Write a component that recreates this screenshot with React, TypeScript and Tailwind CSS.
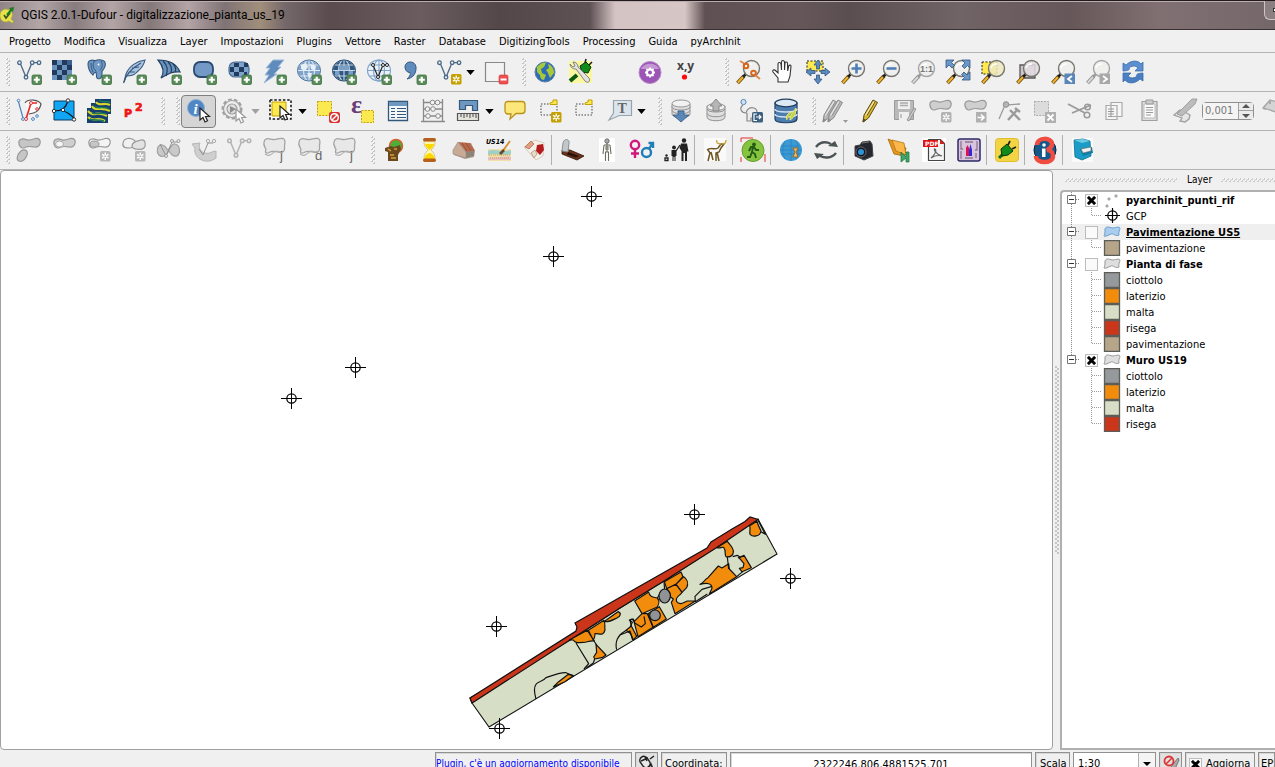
import React, { useState } from "react";

type Kids = { children?: React.ReactNode };

/* ---------- icon building blocks ---------- */

const Ico = ({ children }: Kids) => (
  <svg viewBox="0 0 24 24" className="h-6 w-6 shrink-0 overflow-visible" fill="none" aria-hidden="true">
    {children}
  </svg>
);

const Plus = () => (
  <g>
    <rect x="15" y="15" width="9.5" height="9.5" rx="1.5" fill="#5a8c5a" stroke="#3f7040" strokeWidth=".8" />
    <path d="M19.75 16.8v6M16.8 19.75h6" stroke="#fff" strokeWidth="2.2" />
  </g>
);

const Star = ({ c = "#c4a000", x = 14, y = 14 }: { c?: string; x?: number; y?: number }) => (
  <g transform={`translate(${x} ${y})`}>
    <rect width="10.5" height="10.5" rx="1.5" fill={c} />
    <path d="M5.25 1.5v7.500M2 3.400l6.500 3.700M2 7.100l6.500-3.700" stroke="#fff" strokeWidth="1.4" />
    <circle cx="5.25" cy="5.25" r="1" fill={c} />
  </g>
);

const Vee = ({ c = "#4a6785", w = 1.3 }: { c?: string; w?: number }) => (
  <g stroke={c} strokeWidth={w} fill="#eef3f8">
    <path d="M3.500 4l5 12M9.500 16l5-12M17 2.700h3" fill="none" />
    <circle cx="2.500" cy="2.700" r="1.800" />
    <circle cx="15.200" cy="2.700" r="1.800" />
    <circle cx="22" cy="2.700" r="1.800" />
    <circle cx="9" cy="17.300" r="1.800" />
  </g>
);

const Lens = ({ off = false, fill = "#eeeeec" }: { off?: boolean; fill?: string }) => (
  <g>
    <path d="M1.500 23l6.500-7" stroke={off ? "#8c8c8c" : "#6b4b10"} strokeWidth="3.8" />
    <path d="M1.800 22.700l5.900-6.400" stroke={off ? "#d8d8d8" : "#f0b429"} strokeWidth="2" />
    <path d="M7 17l2.800-3" stroke={off ? "#999" : "#222"} strokeWidth="2.600" />
    <circle cx="15.500" cy="8.500" r="8" fill={fill} fillOpacity=".85" stroke={off ? "#a5a5a5" : "#77776f"} strokeWidth="1.400" />
    <path d="M10 8a5.400 5.400 0 0 1 6-4" stroke="#fff" strokeWidth="1.600" />
  </g>
);

const Globe = ({ a, b }: { a: string; b: string }) => (
  <g stroke={b} strokeWidth="1.100">
    <ellipse cx="12" cy="10.500" rx="11.500" ry="10.500" fill={a} />
    <ellipse cx="12" cy="10.500" rx="5.500" ry="10.500" />
    <path d="M12 0v21M.5 10.500h23M2.500 5h19M2.500 16h19" />
  </g>
);

const BLOB = "M2 7C1 2 6 1 9 2.500s6 0 9-1c4-1 6 2 5 5s-3 4-6 3.500c-3-.500-5-1-8 0-3 2-6 1-7-3z";

const Cursor = ({ x = 12, y = 11, c = "#222" }: { x?: number; y?: number; c?: string }) => (
  <path transform={`translate(${x} ${y})`} d="M0 0v12l3-2.500 2 4.500 2.500-1.200-2-4.300h4z" fill="#fff" stroke={c} strokeWidth="1.200" />
);

const Pencil = ({ c = "#d8b730", d = "#5b4b10" }: { c?: string; d?: string }) => (
  <g>
    <path d="M6 16L15 1l4.500 2.500L10.500 19 5 23z" fill={c} stroke={d} strokeWidth="1" />
    <path d="M9 16.500L17 3M5 23l.6-3.200 1.900 1.500z" stroke={d} strokeWidth=".9" fill={d} />
    <path d="M7.500 16.500L16 2.500" stroke="#fff" strokeOpacity=".7" strokeWidth="1.200" />
  </g>
);

const Swoosh = ({ t }: { t: string }) => (
  <Ico>
    <path d="M2 5c1-5 5-3 9-2.500s6-2 10-1c3 1 2 4 1.500 7 0 3 1 6-2.500 7-5 0-8-3-13 0-4 2-4-1-3-3C3 10 1 8 2 5z" transform="translate(0 -1)" fill="#e8e8e8" stroke="#a3a3a3" strokeWidth="1.300" />
    <path d="M3 16c5 4 8-2 11-3 3 0 4 2 7 0" stroke="#b0b0b0" strokeWidth="1.200" />
    <text x="18" y="22" fontSize="13" fill="#666" fontFamily="Liberation Sans">{t}</text>
  </Ico>
);

/* ---------- toolbar pieces ---------- */

const Grip = () => (
  <svg className="h-7 w-[11px] shrink-0" aria-hidden="true">
    {[0, 1, 2, 3, 4, 5, 6].map((i) => (
      <g key={i}>
        <path d={`M6 ${i * 4}h2v2h-2zM8 ${i * 4 + 2}h2v2h-2z`} fill="#c4c4c4" />
        <path d={`M6 ${i * 4}h1v1h-1zM8 ${i * 4 + 2}h1v1h-1z`} fill="#fff" />
      </g>
    ))}
  </svg>
);

const Tool = ({ label, children, active = false }: Kids & { label: string; active?: boolean }) => (
  <button
    type="button"
    aria-label={label}
    aria-pressed={active || undefined}
    className={
      active
        ? "flex h-[33px] w-[35px] shrink-0 items-center justify-center rounded-sm border border-[#808080] bg-[#d5d5d5]"
        : "flex h-[33px] w-[35px] shrink-0 items-center justify-center rounded-sm"
    }
  >
    {children}
  </button>
);

const Drop = ({ label, off = false }: { label: string; off?: boolean }) => (
  <button type="button" aria-label={label} className="flex h-8 w-3 shrink-0 items-center">
    <svg viewBox="0 0 10 6" className="h-[5px] w-[9px]" aria-hidden="true">
      <path d="M0 0h10L5 6z" fill={off ? "#a0a0a0" : "#000"} />
    </svg>
  </button>
);

const Sep = () => <div className="h-[30px] w-[3px] shrink-0 border-l border-[#b0b0b0]" />;

const Bar = ({ children, label }: Kids & { label: string }) => (
  <div role="toolbar" aria-label={label} className="flex h-[39px] shrink-0 items-center overflow-hidden border-b border-[#b4b4b4] bg-[#f0f0f0]">
    {children}
  </div>
);

/* ---------- toolbars ---------- */

const FileBar = () => (
  <Bar label="Gestione layer">
    <Grip />
    <Tool label="Aggiungi vettore"><Ico><Vee /><Plus /></Ico></Tool>
    <Tool label="Aggiungi raster">
      <Ico>
        <path d="M0 0h20v20H0z" fill="#6b93c0" />
        <path d="M0 0h5v5H0zM10 0h5v5h-5zM5 5h5v5H5zM15 5h5v5h-5zM0 10h5v5H0zM10 10h5v5h-5zM5 15h5v5H5z" fill="#223a5c" />
        <path d="M15 0h5v5h-5z" fill="#3d618f" />
        <Plus />
      </Ico>
    </Tool>
    <Tool label="Aggiungi PostGIS">
      <Ico>
        <path d="M1 4C1 0 5-.500 8 .8c3-1.500 6-1 8-.3 3 1 3 5 1 8l-2 3c0 3 .5 6-2 7s-4-1-3.500-3.500L9 12l-2 1-1 2C3 13 1 8 1 4z" fill="#6f98c4" stroke="#35587f" strokeWidth="1.100" />
        <path d="M7.500 1c-2 3-2 7 1.500 10M14 1c2 3 1.500 6-1 9.500M4 3c0 3 .5 6 2 9" stroke="#35587f" strokeWidth="1" />
        <circle cx="11.500" cy="4.500" r=".9" fill="#fff" />
        <Plus />
      </Ico>
    </Tool>
    <Tool label="Aggiungi SpatiaLite">
      <Ico>
        <path d="M23 0C15 1 7 6 4 14l-2 8 2-6c5 0 9-1 11-4 5-4 7-7 8-12z" fill="#a9c4df" stroke="#3a5a80" strokeWidth="1.100" />
        <path d="M1.500 23C4 14 10 8 19 3M7 12l6 0M10 8l7-1" stroke="#3a5a80" strokeWidth="1.200" />
        <Plus />
      </Ico>
    </Tool>
    <Tool label="Aggiungi MSSQL">
      <Ico>
        <path d="M1 0c8 0 18 2 22 12-7-1-12 2-19 6C8 12 6 6 1 0z" fill="#6b93c0" stroke="#22405f" strokeWidth="1.200" />
        <path d="M6 1c5 5 5 9 3 15M11 2c4 4 4 8 3 11M16 4c3 3 3 6 2 8" stroke="#22405f" strokeWidth="1.200" />
        <Plus />
      </Ico>
    </Tool>
    <Tool label="Aggiungi Oracle"><Ico><rect x="2" y="2" width="19" height="15" rx="6" fill="#7399c6" stroke="#2b4a70" strokeWidth="1.800" /><Plus /></Ico></Tool>
    <Tool label="Aggiungi Oracle raster">
      <Ico>
        <rect x="2" y="2" width="20" height="15" rx="6" fill="#7ea3cc" stroke="#4b6d96" strokeWidth="1.200" />
        <path d="M7 3h5v4H7zM17 3h4v4h-4zM3 7h4v5H3zM12 7h5v5h-5zM7 12h5v4H7zM17 12h3v4h-3z" fill="#223a5c" />
        <Plus />
      </Ico>
    </Tool>
    <Tool label="Aggiungi SQL Anywhere"><Ico><path d="M11 0h11l-6 7h3l-7 7h3L2 23l5-8H3l5-7H4z" fill="#5f8cbd" stroke="#9dbbd9" strokeWidth="1" /><Plus /></Ico></Tool>
    <Tool label="Aggiungi WMS">
      <Ico><Globe a="#7fa3c8" b="#dfeaf5" /><ellipse cx="12" cy="10.500" rx="11.500" ry="10.500" stroke="#4b7097" /><path d="M4 5l5-2 2 4-3 4-4-2zM13 4l6 2-1 5-4-2zM10 13l5 0-2 6z" fill="#e7eff7" /><Plus /></Ico>
    </Tool>
    <Tool label="Aggiungi WCS"><Ico><Globe a="#33587f" b="#c4d6e8" /><path d="M7 6h10v4H7zM3 11h4v4H3zM17 11h4v4h-4z" fill="#7ba0c8" /><ellipse cx="12" cy="10.500" rx="11.500" ry="10.500" stroke="#264869" /><Plus /></Ico></Tool>
    <Tool label="Aggiungi WFS">
      <Ico><Globe a="#e9f1f9" b="#7ea1c6" /><path d="M6 5l5 12 5-12h4" stroke="#222" strokeWidth="1.200" /><g fill="#fff" stroke="#222"><circle cx="6" cy="5" r="1.500" /><circle cx="11" cy="17" r="1.500" /><circle cx="16" cy="5" r="1.500" /><circle cx="20" cy="5" r="1.500" /></g><Plus /></Ico>
    </Tool>
    <Tool label="Aggiungi testo delimitato"><Ico><path d="M3 7c0-7 12-7 11 2-.5 6-4 9-9 10 2-2 4-4 3-6.500-3 0-5-2.500-5-5.500z" fill="#5f8cbd" stroke="#33567f" strokeWidth="1" /><Plus /></Ico></Tool>
    <Tool label="Nuovo shapefile"><Ico><Vee /><Star x={14} y={14} /></Ico></Tool>
    <Drop label="Altri nuovi layer" />
    <Tool label="Rimuovi layer">
      <Ico><path d="M1.500 2.500h19v19h-19z" fill="#f3f3f3" stroke="#888" strokeWidth="1.200" /><rect x="15" y="15" width="9" height="9" rx="1.500" fill="#ee5050" stroke="#c33" strokeWidth=".6" /><path d="M16.500 19.500h6" stroke="#fff" strokeWidth="2" /></Ico>
    </Tool>
    <div className="flex w-[14px] shrink-0 justify-end"><Grip /></div>
    <Tool label="Geocode">
      <Ico><circle cx="12" cy="12" r="10" fill="#2c6cb5" stroke="#5b7ea5" /><path d="M4 7c3-4 7-5 9-4l-2 4-3 2 1 4 4 2-2 5c-3 0-4-3-4-5L4 12zM15 4c5 2 6 6 6 9l-4 5-2-5-2-3 3-2z" fill="#a8c83c" /></Ico>
    </Tool>
    <Tool label="Plugin builder">
      <Ico>
        <path d="M1 1h23v22H1z" fill="#fbf6a0" />
        <path d="M2 21l7-6" stroke="#0a5a12" strokeWidth="4" />
        <path d="M12 6l6-4 5 5-3 6-6-1z" fill="#138a1c" stroke="#04390a" />
        <path d="M17 3l1-4M21 5l3-3" stroke="#222" strokeWidth="1.600" />
        <path d="M2 4c1 5 4 5 6 5l9 12c3 3 6 0 4-3L10 7c0-3-2-5-5-5l2 4-2 1z" fill="#e2e2e2" stroke="#777" strokeWidth=".9" />
      </Ico>
    </Tool>
    <div className="w-[35px] shrink-0" />
    <Tool label="Impostazioni plugin">
      <Ico><circle cx="12" cy="12.500" r="11" fill="#9a55b5" stroke="#b98bca" /><path d="M3 9c3-7 15-7 18 0z" fill="#c597d4" /><circle cx="12" cy="12.500" r="3" stroke="#fff" strokeWidth="2" /><path d="M12 7.500v2M12 15.500v2M7 12.500h2M15 12.500h2M8.500 9l1.500 1.500M14 14.500l1.500 1.500M15.500 9L14 10.500M10 14.500L8.500 16" stroke="#fff" strokeWidth="1.800" /></Ico>
    </Tool>
    <Tool label="Coordinate">
      <Ico><text x="4" y="10" fontSize="12" fontWeight="bold" fill="#444" fontFamily="Open Sans">x,y</text><circle cx="11.500" cy="17" r="2.600" fill="#ff0a0a" /></Ico>
    </Tool>
    <div className="flex w-[28px] shrink-0 justify-end"><Grip /></div>
    <Tool label="Tocca e zooma">
      <Ico><Lens /><path d="M4 1l5 3M19 15l5 4" stroke="#e08a4c" strokeWidth="2" /><circle cx="10" cy="6" r="2.300" stroke="#d8661c" strokeWidth="2" /><circle cx="17.500" cy="13" r="2.300" stroke="#d8661c" strokeWidth="2" /></Ico>
    </Tool>
    <Tool label="Pan">
      <Ico><path d="M7 22v-4l-5-6c-1-2 1-3 3-1l2 2V4c0-2 2.500-2 3 0l.500 6V2c0-2 2.500-2 3 0v8l.5-7c.5-1.500 2.500-1.500 2.500.5l.2 7.500 1-5c.8-1.500 2.500-1 2.300.5L19 16l-2 6z" fill="#fff" stroke="#333" strokeWidth="1.100" /></Ico>
    </Tool>
    <Tool label="Pan sulla selezione">
      <Ico><path d="M1 1h16v10H1z" fill="#fce94f" stroke="#222" strokeDasharray="2 1.500" /><path d="M12 0l4 5h-2.500v4h-3V5H8zM12 24l-4-5h2.500v-4h3v4H16zM0 12l5-4v2.500h4v3H5V16zM24 12l-5 4v-2.500h-4v-3h4V8z" fill="#5b8ac0" stroke="#2d5580" strokeWidth=".8" /></Ico>
    </Tool>
    <Tool label="Zoom avanti"><Ico><Lens /><path d="M15.500 3.500v10M10.500 8.500h10" stroke="#4f7fb5" strokeWidth="2.600" /></Ico></Tool>
    <Tool label="Zoom indietro"><Ico><Lens /><path d="M10.500 8.500h10" stroke="#4f7fb5" strokeWidth="2.600" /></Ico></Tool>
    <Tool label="Zoom nativo"><Ico><Lens off /><text x="9" y="12" fontSize="9" fontWeight="bold" fill="#777" fontFamily="Liberation Sans">1:1</text></Ico></Tool>
    <Tool label="Zoom completo">
      <Ico><Lens /><path d="M0 0h8L5.500 2.500l3 3-2.500 2.500-3-3L0 8zM24 0v8l-2.500-2.500-3 3L16 6l3-3L16 0zM24 20h-8l2.500-2.500-3-3L18 12l3 3 3-3z" fill="#6a97c8" stroke="#2d5580" strokeWidth=".8" /></Ico>
    </Tool>
    <Tool label="Zoom sulla selezione"><Ico><path d="M1 2h15v12H1z" fill="#fce94f" stroke="#222" strokeDasharray="2 1.500" /><Lens fill="#efe9c0" /></Ico></Tool>
    <Tool label="Zoom sul layer"><Ico><path d="M4 5h15v13H4z" fill="#cfc5cf" stroke="#555" strokeWidth="1.300" /><Lens fill="#e2dce2" /></Ico></Tool>
    <Tool label="Zoom precedente"><Ico><Lens /><rect x="13.500" y="13.500" width="10.500" height="10.500" fill="#5a87b9" /><path d="M21 16l-4 3 4 3" stroke="#fff" strokeWidth="1.800" /></Ico></Tool>
    <Tool label="Zoom successivo"><Ico><Lens off /><rect x="13.500" y="13.500" width="10.500" height="10.500" fill="#a8a8a8" /><path d="M17 16l4 3-4 3" stroke="#fff" strokeWidth="1.800" /></Ico></Tool>
    <Tool label="Aggiorna vista">
      <Ico><path d="M2 11V3l3 2c5-5 12-5 15-1l2-2v9h-8l3-3c-3-3-7-2-9 0 2 2-3 3-6 3z" fill="#5c8fd0" stroke="#3a6cab" strokeWidth=".8" /><path d="M22 13v8l-3-2c-5 5-12 5-15 1l-2 2v-9h8l-3 3c3 3 7 2 9 0-2-2 3-3 6-3z" fill="#4a7fc2" stroke="#3a6cab" strokeWidth=".8" /></Ico>
    </Tool>
  </Bar>
);

const Coins = ({ on }: { on: boolean }) => (
  <g stroke="#8a8a8a" strokeWidth=".9" fill="#dedede">
    <path d="M3 14v4c0 5 18 5 18 0v-4z" transform={on ? "translate(0 -3)" : ""} />
    <path d="M3 10v4c0 5 18 5 18 0v-4z" transform={on ? "translate(0 -3)" : ""} />
    <path d="M3 7v3c0 4 18 4 18 0V7z" transform={on ? "translate(0 -2)" : ""} />
    <ellipse cx="12" cy={on ? 4.5 : 8} rx="9" ry="3.500" fill="#f2f2f2" />
  </g>
);

const EditBar = () => {
  const [tol, setTol] = useState("0,001");
  return (
    <Bar label="Modifica">
      <Grip />
      <Tool label="Ricalca">
        <Ico><path d="M1 1l5 18" stroke="#4a80c0" strokeWidth="1.200" /><path d="M8 4c3-5 14-3 16 1-2 8-6 9-12 10" fill="#fafafa" stroke="#555" strokeWidth="1.200" /><path d="M9 20l5-16 6 0" stroke="#f02020" strokeWidth="1.600" /><g fill="#fff" stroke="#d33"><circle cx="9" cy="20" r="1.500" /><circle cx="14" cy="4" r="1.500" /><circle cx="20" cy="10" r="1.300" /></g><g fill="#fff" stroke="#4a80c0"><circle cx="1.500" cy="1.500" r="1.300" /><circle cx="6" cy="20" r="1.400" /><circle cx="16" cy="20" r="1.400" /><circle cx="20" cy="17" r="1.300" /></g></Ico>
      </Tool>
      <Tool label="Topologia">
        <Ico><path d="M2 2h20v19H2z" fill="#10a5f5" stroke="#0d3d60" strokeWidth="1" /><path d="M2 12c7 0 12-2 14-11M11 12c5 1 8 4 12 8" stroke="#111" strokeWidth="1.200" /><g fill="#fff" stroke="#333"><circle cx="2" cy="12" r="1.700" /><circle cx="16" cy="1.500" r="1.700" /><circle cx="11" cy="11" r="1.700" /><circle cx="22" cy="20.500" r="1.700" /></g></Ico>
      </Tool>
      <Tool label="Profilo">
        <Ico><path d="M8 0h16v15h-3v9H0V9h4V4h4z" fill="#173f70" /><path d="M9 3c3 5 8 0 14 3M5 7c3 6 9 0 18 5M1 12c6 7 8-1 19 5M1 18c6 6 9-1 17 4" stroke="#d6d62c" strokeWidth="2.200" /><path d="M12 1c3 3 7 1 11 2M8 8c5 2 8-1 14 2M5 14c5 2 8-1 14 1M3 20c5 2 8 0 14 2" stroke="#1f7a56" strokeWidth="1.400" /></Ico>
      </Tool>
      <Tool label="p2">
        <Ico><text x="2" y="18" fontSize="11" fontWeight="bold" fill="#f01414" stroke="#f01414" strokeWidth=".7" fontFamily="DejaVu Sans">P</text><text x="13" y="12" fontSize="11" fontWeight="bold" fill="#f01414" stroke="#f01414" strokeWidth=".7" fontFamily="DejaVu Sans">2</text></Ico>
      </Tool>
      <div className="flex w-[15px] shrink-0 justify-end"><Grip /></div>
      <div className="flex w-[15px] shrink-0 justify-end"><Grip /></div>
      <Tool label="Informazione elementi" active>
        <Ico><circle cx="9" cy="9" r="8.500" fill="#4f87c4" stroke="#8fb0d6" /><text x="6.500" y="14.500" fontSize="15" fontStyle="italic" fontWeight="bold" fill="#fff" fontFamily="Liberation Serif">i</text><Cursor x={13} y={9} /></Ico>
      </Tool>
      <Tool label="Esegui azione">
        <Ico><g stroke="#a0a0a0" strokeWidth="1.200"><circle cx="10" cy="10" r="9.500" strokeDasharray="3.600 2.200" strokeWidth="2" /><circle cx="10" cy="10" r="8.500" fill="#ececec" /><circle cx="10" cy="10" r="5" fill="#e0e0e0" /></g><path d="M8 7l6 3-6 4z" fill="#8d8d8d" /><Cursor x={14} y={10} c="#999" /></Ico>
      </Tool>
      <Drop label="Azioni" off />
      <Tool label="Seleziona">
        <Ico><path d="M1 1h21v19H1z" fill="#fff" stroke="#111" strokeWidth="1.500" strokeDasharray="2.500 1.800" /><path d="M3 3h14v14H3z" fill="#fce94f" stroke="#c4a000" /><Cursor x={11} y={7} /></Ico>
      </Tool>
      <Drop label="Opzioni di selezione" />
      <Tool label="Deseleziona">
        <Ico><path d="M1.500 2.500h14v14h-14z" fill="#fce94f" stroke="#c4a000" strokeDasharray="2 1.200" /><rect x="13" y="13" width="11" height="11" rx="2" fill="#d83434" /><circle cx="18.500" cy="18.500" r="3.800" stroke="#fff" strokeWidth="1.500" /><path d="M16 21l5-5" stroke="#fff" strokeWidth="1.500" /></Ico>
      </Tool>
      <Tool label="Seleziona con espressione">
        <Ico><text x="0" y="14" fontSize="26" fontWeight="bold" fill="#6a3d78" fontFamily="Liberation Serif">ε</text><path d="M10.500 11.500h12v12h-12z" fill="#fce94f" stroke="#c4a000" strokeDasharray="2 1.200" /></Ico>
      </Tool>
      <Tool label="Tabella attributi">
        <Ico><path d="M2.500 2.500h19v19h-19z" fill="#f4f8fb" stroke="#33587a" strokeWidth="1.300" /><path d="M3 3h18v4H3z" fill="#6e98bf" /><path d="M5 9.500h4M11 9.500h9M5 12.500h4M11 12.500h9M5 15.500h4M11 15.500h9M5 18.500h4M11 18.500h9" stroke="#33587a" strokeWidth="1.200" /></Ico>
      </Tool>
      <Tool label="Calcolatore campi">
        <Ico><path d="M2.500 0v23M21.500 0v23M0 22.500h24M2 3.500h20M2 10h20M2 17h20" stroke="#8a8a8a" strokeWidth="1.300" /><g fill="#f4f4f4" stroke="#8a8a8a"><circle cx="11.500" cy="3.500" r="2.300" /><circle cx="16.500" cy="3.500" r="2.300" /><circle cx="6.500" cy="10" r="2.300" /><circle cx="12" cy="10" r="2.300" /><circle cx="7" cy="17" r="2.300" /><circle cx="17" cy="17" r="2.300" /></g></Ico>
      </Tool>
      <Tool label="Misura">
        <Ico><path d="M3.500 1.500h18v10h-5v-5h-7v4h-6z" fill="#6e98bf" stroke="#33587a" strokeWidth="1.200" /><path d="M1.500 14.500h21v7h-21z" fill="#e4e4dc" stroke="#555" strokeWidth="1.200" /><path d="M5 15v3M8 15v4M11 15v3M14 15v4M17 15v3M20 15v4" stroke="#444" /></Ico>
      </Tool>
      <Drop label="Strumenti di misura" />
      <Tool label="Suggerimenti mappa">
        <Ico><path d="M5 2.500h14c2 0 3 1 3 3v6c0 2-1 3-3 3h-6L7 20l1-5H5c-2 0-3-1.500-3-3.500v-6c0-2 1-3 3-3z" fill="#fbe77a" stroke="#b8921a" strokeWidth="1.300" /></Ico>
      </Tool>
      <Tool label="Nuovo segnalibro">
        <Ico><path d="M3 5h16v11H3z" stroke="#444" strokeDasharray="1.500 1.500" /><path d="M12 5.500V4l3-1V1h4v4.500z" fill="#fce94f" stroke="#c4a000" /><Star x={13} y={13} /></Ico>
      </Tool>
      <Tool label="Mostra segnalibri">
        <Ico><path d="M3 5h16v11H3z" stroke="#444" strokeDasharray="1.500 1.500" /><path d="M12 5.500V4l3-1V1h4v4.500z" fill="#fce94f" stroke="#c4a000" /></Ico>
      </Tool>
      <Tool label="Annotazione testo">
        <Ico><path d="M5.500 1.500h18v15h-12L1 21l4.500-7z" fill="#dce4ec" stroke="#97a3af" strokeWidth="1.200" /><text x="9.500" y="14" fontSize="14" fontWeight="bold" fill="#666" fontFamily="Liberation Serif">T</text></Ico>
      </Tool>
      <Drop label="Annotazioni" />
      <div className="flex w-[14px] shrink-0 justify-end"><Grip /></div>
      <Tool label="Scarica offline"><Ico><Coins on /><path d="M9 12h6v4h5l-8 7-8-7h5z" fill="#5b86b8" stroke="#33587f" strokeWidth=".8" /></Ico></Tool>
      <Tool label="Sincronizza"><Ico><Coins on={false} /><path d="M12 0l6 7h-3v5H9V7H6z" fill="#b5b5b5" stroke="#808080" strokeWidth=".9" /></Ico></Tool>
      <Tool label="Importa in PostGIS">
        <Ico><circle cx="4.500" cy="3" r="2.600" fill="#cfe0f2" stroke="#5b86b8" /><path d="M4 6c-4 3-2 8 3 8 1-5 5-6 8-5 3 1 3 3 3 6v7h-4v-3h-2v3H8v-8" fill="#ececec" stroke="#888" strokeWidth="1.200" /><rect x="13" y="13" width="11" height="10.500" rx="1.500" fill="#3c607f" /><path d="M18 15h-3v6.500h3M17 18h5M20 16l2 2-2 2" stroke="#fff" strokeWidth="1.200" /></Ico>
      </Tool>
      <Tool label="DB Manager">
        <Ico><path d="M1 4v16c0 5 22 5 22 0V4z" fill="#4d7dae" stroke="#1f3f60" strokeWidth="1.200" /><ellipse cx="12" cy="4" rx="11" ry="3.800" fill="#dce8f3" stroke="#1f3f60" strokeWidth="1.200" /><path d="M1 10c0 4 22 4 22 0M1 15c0 4 22 4 22 0" stroke="#cfe0f0" strokeWidth="1.500" /><path d="M13 21c-2-4 2-8 5-8M16 21c0-5 3-8 6-12 0 5-1 9-6 12z" fill="#c5d33b" stroke="#e8ee8e" strokeWidth="1" /></Ico>
      </Tool>
      <div className="flex w-[14px] shrink-0 justify-end"><Grip /></div>
      <Tool label="Modifiche correnti"><Ico><g transform="translate(-5 0)"><Pencil c="#b9b9b9" d="#8a8a8a" /></g><g transform="translate(0 0)"><Pencil c="#b9b9b9" d="#8a8a8a" /></g><path d="M20 21h5l-2.500 3z" fill="#999" /></Ico></Tool>
      <Tool label="Attiva modifiche"><Ico><Pencil /></Ico></Tool>
      <Tool label="Salva modifiche"><Ico><path d="M1.500 1.500h19v19h-19z" fill="#b9b9b9" stroke="#9a9a9a" /><path d="M5 2h12v8H5zM6 13h10v8H6z" fill="#efefef" /><path d="M7 4h8M7 6.500h8M8 15v4" stroke="#aaa" strokeWidth="1.300" /><path d="M14 21l7-12 2 1-7 12z" fill="#ccc" stroke="#888" strokeWidth=".8" /></Ico></Tool>
      <Tool label="Aggiungi elemento"><Ico><path d={BLOB} fill="#cfcfcf" stroke="#999" strokeWidth="1.200" /><Star c="#b3b3b3" x={13} y={13} /></Ico></Tool>
      <Tool label="Sposta elemento"><Ico><path d={BLOB} fill="#cfcfcf" stroke="#999" strokeWidth="1.200" /><rect x="13" y="13" width="10.500" height="10.500" fill="#b0b0b0" /><path d="M14.500 18.500h6M18 15.500l3 3-3 3" stroke="#fff" strokeWidth="1.600" /></Ico></Tool>
      <Tool label="Strumento vertici"><Ico><path d="M1 20L7 6l15-1" stroke="#9a9a9a" strokeWidth="1.300" /><circle cx="8" cy="5.500" r="2.800" fill="#b5b5b5" stroke="#909090" /><path d="M10 21L20 10M12 11l10 10M17 9l5 4" stroke="#9a9a9a" strokeWidth="2.400" /></Ico></Tool>
      <Tool label="Elimina selezionati"><Ico><path d="M1.500 2.500h14v14h-14z" fill="#dcdcdc" stroke="#aaa" strokeDasharray="2 1.200" /><rect x="12" y="13" width="11" height="11" fill="#b0b0b0" /><path d="M14.500 15.500l6 6M20.500 15.500l-6 6" stroke="#fff" strokeWidth="1.800" /></Ico></Tool>
      <Tool label="Taglia"><Ico><path d="M0 5l17 9M4 14L23 6" stroke="#9a9a9a" strokeWidth="1.800" /><circle cx="19.500" cy="8" r="2.800" stroke="#9a9a9a" strokeWidth="1.500" /><circle cx="19" cy="16" r="2.800" stroke="#9a9a9a" strokeWidth="1.500" /></Ico></Tool>
      <Tool label="Copia"><Ico><path d="M8 3.500h11v14H8zM3 6.500h11v14H3z" fill="#f6f6f6" stroke="#aaa" strokeWidth="1.200" /><path d="M5 10h6M5 12.500h6M5 15h6M5 17.500h4" stroke="#999" /></Ico></Tool>
      <Tool label="Incolla"><Ico><path d="M4 2.500h15v19H4z" fill="#ddd" stroke="#a0a0a0" strokeWidth="1.200" /><path d="M6 5h11v14H6z" fill="#fbfbfb" stroke="#bbb" /><path d="M8 1h7v4H8z" fill="#ccc" stroke="#999" /><path d="M8 8.500h7M8 11h7M8 13.500h7M8 16h5" stroke="#999" /></Ico></Tool>
      <Tool label="Strumenti avanzati"><Ico><path d="M1 16l6-5 5 2 5 3-1 4-4 3-5-1 2-3z" fill="#e6e6e6" stroke="#a0a0a0" strokeWidth="1.300" /><path d="M4 15L19 0l5 0-2 5L9 17z" fill="#bcbcbc" stroke="#a0a0a0" /></Ico></Tool>
      <div className="flex h-[18px] w-[52px] shrink-0 items-stretch rounded-sm border border-[#909090] bg-white">
        <input aria-label="Tolleranza" value={tol} onChange={(e) => setTol(e.target.value)} className="h-4 w-[35px] min-w-0 bg-[#f4f4f4] pl-0.5 text-[11px] leading-4 text-[#787878] outline-none" />
        <span className="flex flex-1 flex-col items-center justify-around border-l border-[#a0a0a0] bg-[#ececec]">
          <svg viewBox="0 0 8 4" className="h-1 w-2" aria-hidden="true"><path d="M0 4h8L4 0z" fill="#555" /></svg>
          <span className="h-px w-full bg-[#a0a0a0]" />
          <svg viewBox="0 0 8 4" className="h-1 w-2" aria-hidden="true"><path d="M0 0h8L4 4z" fill="#555" /></svg>
        </span>
      </div>
      <Tool label="Ruota elemento"><Ico><path d="M3 9L10 1l14 4-6 9-8-3z" fill="#d4d4d4" stroke="#a0a0a0" strokeWidth="1.200" /><path d="M3 9l3 1M10 1v4" stroke="#aaa" strokeWidth="2" /></Ico></Tool>
    </Bar>
  );
};

const ArchBar = () => (
  <Bar label="pyArchInit">
    <Grip />
    <Tool label="Semplifica"><Ico><path d={BLOB} transform="translate(0 -1)" fill="#c6c6c6" stroke="#999" strokeWidth="1.200" /><path d="M3 14c3-4 9-2 7 3s-5 7-8 6-2-6 1-9z" fill="#c6c6c6" stroke="#999" strokeWidth="1.200" /></Ico></Tool>
    <Tool label="Aggiungi anello"><Ico><path d={BLOB} transform="translate(0 -1)" fill="#cfcfcf" stroke="#999" strokeWidth="1.200" /><ellipse cx="7.500" cy="6" rx="4" ry="3" fill="#f4f4f4" stroke="#aaa" /></Ico></Tool>
    <Tool label="Aggiungi parte"><Ico><path d={BLOB} transform="translate(0 -1)" fill="#f4f4f4" stroke="#999" strokeWidth="1.200" /><ellipse cx="7.500" cy="6" rx="4.500" ry="3" fill="#c6c6c6" stroke="#999" /><Star c="#b8b8b8" x={13} y={13} /></Ico></Tool>
    <Tool label="Riempi anello"><Ico><path d="M1 5c1-6 8-5 11-3s0 8-4 8-8 0-7-5z" fill="#f0f0f0" stroke="#999" strokeWidth="1.200" /><path d="M10 8c0-5 6-5 9-6 5-1 5 6 3 8s-12 2-12-2z" fill="#e2e2e2" stroke="#999" strokeWidth="1.200" /><Star c="#b8b8b8" x={13} y={13} /></Ico></Tool>
    <Tool label="Unisci elementi"><Ico><path d="M1 9c2-4 7-2 9 2s4-6 8-5c5 1 6 9 2 12-4 1-6-2-8-5-3 5-7 7-10 4-2-2-2-5-1-8z" fill="#c9c9c9" stroke="#a0a0a0" strokeWidth="1.200" /><path d="M3 6l6 12 6-14h7" stroke="#909090" /><g fill="#eee" stroke="#999"><circle cx="15" cy="3" r="1.500" /><circle cx="21.500" cy="3" r="1.500" /><circle cx="9" cy="18" r="1.500" /></g></Ico></Tool>
    <Tool label="Rimodella"><Ico><path d="M0 6l8-1-1 3c1 7 8 9 13 6l4-1v7c-5 4-12 4-16 1-4-2-6-7-5-11z" fill="#cfcfcf" stroke="#b5b5b5" /><path d="M7 11l4 6 5-12h5" stroke="#909090" /><g fill="#eee" stroke="#aaa"><circle cx="16" cy="3" r="1.700" /><circle cx="22" cy="3" r="1.700" /></g></Ico></Tool>
    <Tool label="Dividi elementi"><Ico><Vee c="#b3b3b3" w={1.5} /></Ico></Tool>
    <Tool label="Taglia con linea"><Swoosh t="j" /></Tool>
    <Tool label="Dividi con linea"><Swoosh t="d" /></Tool>
    <Tool label="Unisci con linea"><Swoosh t="j" /></Tool>
    <div className="flex w-[15px] shrink-0 justify-end"><Grip /></div>
    <Tool label="Sito"><Ico><circle cx="14" cy="8" r="6.500" fill="#4fae3a" stroke="#d3602c" strokeWidth="1.500" /><path d="M3 10l6-2 3 1 6-2 1 4-3 6v6H6V14l-3-1z" fill="#6a4a1c" /><path d="M6 11l3 2M12 11l3 0M8 17h4M9 20h5" stroke="#d8a040" strokeWidth="1.500" /></Ico></Tool>
    <Tool label="Periodizzazione"><Ico><path d="M7 3h11c0 5-1 6-4 9 3 3 4 5 4 9H7c0-4 1-6 4-9-3-3-4-4-4-9z" fill="#fff6b0" stroke="#d8c890" /><path d="M8 6h9c0 3-3 5-4.500 6C10 10 8 8 8 6zM7 21c1-4 4-6 5.500-6s4.500 2 5.500 6z" fill="#fbd800" /><rect x="6" width="13" height="3.500" rx="1.700" fill="#b5601c" /><rect x="6" y="20.500" width="13" height="3.500" rx="1.700" fill="#b5601c" /></Ico></Tool>
    <Tool label="Struttura"><Ico><path d="M2 12l4-7 13 0 4 8-1 6-9 2-11-4z" fill="#b09c8c" /><path d="M6 4l12 1 5 8-9 1z" fill="#b8694c" /><path d="M1 12l5-8 8 10v6l-13-4z" fill="#c8ab94" stroke="#988" strokeWidth=".6" /><path d="M14 14l8-1v5l-8 2z" fill="#8d8478" /><path d="M10 5l5 8M14 5l5 8" stroke="#8e4f38" strokeWidth=".8" /></Ico></Tool>
    <Tool label="Unita stratigrafica">
      <Ico><path d="M1 11h23v12H1z" fill="#f3dfa8" /><path d="M1 13c6-3 16 2 23-1v4c-7 3-16-2-23 1z" fill="#9ed0c8" /><path d="M1 19c7 2 16-2 23 0v3H1z" fill="#e9bfc4" /><path d="M2 17h21M3 20h20" stroke="#c09a4c" strokeWidth="1" strokeDasharray="1 1" /><text x="-1" y="5.500" fontSize="7" fontWeight="bold" fontStyle="italic" fill="#000" fontFamily="DejaVu Sans Condensed">US14</text><path d="M23 3l-8 11" stroke="#d88a28" strokeWidth="1.800" /><path d="M17 12l-4 4" stroke="#6a4424" strokeWidth="2.600" /></Ico>
    </Tool>
    <Tool label="Reperti"><Ico><path d="M2 9l11-7 9 3-1 13-7 4z" fill="#f4f0ea" stroke="#d8ccc0" /><path d="M15 7l6-1 1 6-4 5-4-4z" fill="#b51a1c" /><path d="M3 9l6-6 3 3-5 5z" fill="#e0a080" stroke="#b06048" strokeWidth=".7" /><path d="M9 15l4-3 2 4-3 4z" fill="#e8dccc" stroke="#a86" strokeWidth=".7" /></Ico></Tool>
    <Sep />
    <Tool label="Tomba"><Ico><path d="M2 12l8 0 14 6-7 4L2 16z" fill="#6a3218" stroke="#2c1408" strokeWidth=".8" /><path d="M2 13l1-8c1-5 7-4 6 0l-1 9z" fill="#c2c7ca" stroke="#80888c" strokeWidth=".9" /><path d="M8 14l11 4-3 1.500-9-3z" fill="#2a1208" /></Ico></Tool>
    <Tool label="Antropologia"><Ico><path d="M4 0h16v24H4z" fill="#fff" /><circle cx="12" cy="3" r="2.200" fill="#aaa" stroke="#555" strokeWidth=".8" /><path d="M12 5v9M9 7h6M9 7l-1 9M15 7l1 9M10 9h4M10 11h4M10 14h4M10.500 14v9M13.500 14v9" stroke="#6c6c60" strokeWidth="1.100" /></Ico></Tool>
    <Tool label="Determinazione sesso"><Ico><g strokeWidth="2.400"><g stroke="#d0187c"><circle cx="5" cy="7" r="4.200" /><path d="M5 11v9M1 15.500h8" /></g><g stroke="#1f7db8"><circle cx="16.500" cy="14.500" r="4.500" /><path d="M19 11l3.500-6M18.500 5h4.500v5" /></g></g></Ico></Tool>
    <Tool label="Determinazione eta"><Ico><g fill="#222"><circle cx="19" cy="2.500" r="2.200" /><path d="M16 5.500h6l1.500 8h-1.500v9.500h-2v-8h-1.500v8h-2v-10l-2-3z" /><circle cx="9" cy="9.500" r="1.900" /><path d="M6.500 12h5v6h-1v5H9.500v-4h-1v4H7.500v-5h-1z" /><circle cx="1.500" cy="17.500" r="1.200" /></g><path d="M0 20h3v2.500H0zM15 7l-4 6" stroke="#222" strokeWidth="1.300" /></Ico></Tool>
    <Sep />
    <Tool label="Archeozoologia"><Ico><path d="M1 0h22v23H1z" fill="#fafafa" /><path d="M4 12c3-3 8 0 11-2l3-4h3l-3 4-2 4-3 1 0 8M5 12l2 3-2 8M8 14l2 8M14 14l2 9" stroke="#6d5420" strokeWidth="1.500" /><path d="M18 6c-4 0-5-2-4-4M19 6c3 0 4-1 4-4" stroke="#c9a334" strokeWidth="1.300" /></Ico></Tool>
    <Sep />
    <Tool label="Percorso"><Ico><path d="M0 0h24v24H0z" fill="#f5ecec" /><path d="M0 4V0h12M24 24v-8M0 24v-5" stroke="#e63030" strokeWidth="1" /><circle cx="12" cy="12.500" r="11" fill="#86c440" stroke="#62a030" /><circle cx="13" cy="6.500" r="1.900" fill="#245c16" /><path d="M12 9l-1 5 3 2 1 4M11 14l-2 5H6M8 13l2-4h3l2 3h3" stroke="#245c16" strokeWidth="1.900" /></Ico></Tool>
    <Sep />
    <Tool label="Gestione tempo GIS"><Ico><circle cx="12" cy="12" r="11" fill="#3b9ad2" /><path d="M2 8h19M1 12h21M2 16h19M12 1v22M6 3c-3 6-3 12 0 18M17 3c3 6 3 12 0 18" stroke="#2d85c2" strokeWidth=".9" /><path d="M14 10h5l-2 4 2 5h-5l2-5z" fill="#e9c66c" stroke="#a8661c" /></Ico></Tool>
    <Tool label="Sincronizza archivio"><Ico><path d="M2 9C7 3 13 4 17 6M22 15c-5 6-12 5-16 3" stroke="#4b5354" strokeWidth="2.400" /><path d="M24 9l-10-1 7-5zM0 15l10 1-7 5z" fill="#4b5354" /></Ico></Tool>
    <Sep />
    <Tool label="Immagini"><Ico><path d="M3 8l5-1 2-3 8-1 2 3 1 12-9 4-9-4z" fill="#24282e" stroke="#444" strokeLinejoin="round" /><path d="M10 5l7-1" stroke="#777" /><circle cx="9" cy="14" r="5" fill="#15181c" stroke="#667" /><circle cx="9" cy="14" r="3" fill="#2f94d4" /></Ico></Tool>
    <Tool label="Esporta cartella"><Ico><path d="M1 1l8 3 2 3 8 3-2 8-10-2z" fill="#e8951c" stroke="#a06a12" strokeWidth=".8" /><path d="M5 2l12 3 2 12-10-4z" fill="#fbb74a" stroke="#b07312" strokeWidth=".8" /><path d="M14 14l5 5v-5h3v10h-3v-4l-5 4z" fill="#3fa868" stroke="#1d6a3a" strokeWidth=".7" /></Ico></Tool>
    <Tool label="Esporta PDF"><Ico><path d="M0 0h24v24H0z" fill="#fff" /><path d="M6.500 1.500h12l4 4v17h-16z" fill="#f4f4f4" stroke="#444" strokeWidth="1.200" /><path d="M18 1l5 5h-5z" fill="#c22" /><path d="M9 20c4-3 6-8 4-9s0 5 7 7c-3-1-8 0-11 2z" stroke="#666" strokeWidth="1.100" /><path d="M1 2h15v7H1z" fill="#e01414" /><text x="3" y="8" fontSize="6" fontWeight="bold" fill="#fff" fontFamily="DejaVu Sans">PDF</text></Ico></Tool>
    <Tool label="Matrice reperti"><Ico><rect x="1" y="1" width="22" height="22" rx="2" fill="#d8c4dc" stroke="#2c2a66" strokeWidth="1.500" /><path d="M4 3v8h2M4 13v8M20 3v9h-2M19 15v5M8 4h8M8 20h8" stroke="#8a7890" strokeWidth="1.300" /><path d="M9 18v-8l1.500-3 1.500 3v8z" fill="#e0104a" /><path d="M12 18v-6l1.500-6 1.500 6v6z" fill="#2b2ce0" /></Ico></Tool>
    <Sep />
    <Tool label="Collega plugin"><Ico><rect x=".5" y=".5" width="23" height="23" rx="3" fill="#f3d443" stroke="#e0bc30" /><path d="M4 20l5-5" stroke="#146a1c" strokeWidth="3" /><path d="M6 11l6-5 6 7-5 4-6 1z" fill="#118a1c" stroke="#05380a" /><path d="M13 7l2-4M17 11l4-2" stroke="#222" strokeWidth="1.700" /></Ico></Tool>
    <Sep />
    <Tool label="Vista 3D"><Ico><circle cx="12" cy="12" r="11" fill="#14588c" stroke="#0a2034" /><path d="M4 7C4-1 19-1 19 6c0 4-3 5-5 6 3 0 6 2 6 6 0 8-17 8-17 0" stroke="#f04c40" strokeWidth="4.500" /><circle cx="11" cy="7" r="1.800" fill="#fff" /><path d="M9 10.500h3.500V19H9z" fill="#fff" /></Ico></Tool>
    <Sep />
    <Tool label="Archivio"><Ico><path d="M1 0h21v24H1z" fill="#fafafa" /><path d="M3 2l9-1 7 2 1 15-9 4-7-3z" fill="#1a9cc6" stroke="#0d6f92" strokeWidth=".8" /><path d="M3 2l8 3 8-2-7-2z" fill="#6fc9e2" /><path d="M9 11l12-2 1 6-10 3z" fill="#0f7fa6" /><path d="M10 11l10-2 0 4-8 2z" fill="#f0f0f0" stroke="#666" strokeWidth=".6" /></Ico></Tool>
  </Bar>
);

/* ---------- map canvas ---------- */

const points: [number, number][] = [
  [591, 196], [553, 256], [355, 367], [291, 398], [694, 514], [790, 578], [496, 626], [499, 728],
];

const GcpMark = ({ x, y }: { x: number; y: number }) => (
  <g transform={`translate(${x + 0.5} ${y + 0.5})`} stroke="#000" fill="none">
    <circle r="4.700" strokeWidth="1.200" />
    <path d="M-10.500 0h21M0 -10.500v21" strokeWidth="1" />
  </g>
);

const MapCanvas = () => (
  <section aria-label="Mappa" className="min-w-0 flex-1 overflow-hidden rounded-sm border border-[#a0a0a0] bg-white">
    <svg className="block h-full w-full" aria-hidden="true">
      <g transform="translate(-1 -171)">
        <path d="M470 698L472 703 489 727 777 554 758 519 716 547 664 581 620 608 570 640z" fill="#d6dfc6" stroke="#111" strokeWidth="1.100" />
        <path d="M470 698L576 631 577 627 575 623 640 586 707 548 711 542 715 539.500 732 529 745 521.500 750 517 758 519.500 716 548 664 581 620 608 570 640 472 703z" fill="#cb3519" stroke="#111" strokeWidth="1.200" />
        <g transform="translate(460 505) scale(.33333)" fill="#f28c0d" stroke="#111" strokeWidth="3.500" strokeLinejoin="round">
          <path d="M328 405L382 376 403 408C390 405 375 415 368 412 355 414 345 415 340 405z" />
          <path d="M385 376L432 346C437 355 433 365 435 375 430 395 418 385 405 386 405 398 402 402 400 405z" />
          <path d="M436 347L474 320C486 324 480 335 472 338 460 344 448 352 434 350z" />
          <path d="M408 418L438 450 428 457 405 462 401 456 410 442z" />
          <path d="M280 546L296 530 325 508 340 512 315 530z" />
          <path d="M228 582C222 560 222 545 228 538 234 527 248 532 258 518 275 512 300 502 318 503L340 512M348 414L386 476 372 492M400 405L410 420M380 488L400 474 404 462M470 434C464 410 474 390 492 380L510 368 517 352 508 345 516 342 530 356" fill="none" />
        </g>
        <g transform="translate(620 505) scale(.33333)" fill="#f28c0d" stroke="#111" strokeWidth="3.500" strokeLinejoin="round">
          <path d="M389 62L411 49C414 62 420 70 423 78 420 96 398 96 390 88 388 78 392 70 389 62z" />
          <path d="M291 128L322 109C328 118 342 128 340 142 340 152 328 158 318 155 312 148 320 138 311 127 304 125 300 132 291 128z" />
          <path d="M355 158L372 151 394 188 366 200 358 190 369 188 372 176 362 164z" />
          <path d="M240 238C255 232 250 225 264 218L295 183 306 189 326 176 328 192 350 215 268 267 276 250C276 235 262 232 240 238z" />
          <path d="M44 288L86 261C88 275 98 277 112 279 120 288 118 295 112 306L66 326z" />
          <path d="M133 230L183 201 189 215 168 238 140 251z" />
          <path d="M168 238L191 215C202 222 206 235 200 248L186 262z" />
          <path d="M140 251L168 238 186 262C180 274 164 274 170 290 180 302 190 292 202 288L226 288 165 326 154 292 160 282 152 276 150 264z" />
          <path d="M84 326L118 305 139 342 100 367z" />
          <path d="M42 350L66 326 82 326 99 367 54 395z" />
          <path d="M18 376L34 363 50 394 40 405 32 386z" />
          <path d="M226 290L225 274 246 253 276 244M262 267L226 290M322 156L326 192M350 215L368 200M338 155L352 151 364 159M414 46L436 88 423 80M132 230L134 256M112 279L122 262M30 345L40 342 44 354 64 366 76 356 72 334M34 363L30 345" fill="none" />
          <path d="M0 390L30 378 38 405" fill="none" />
          <ellipse cx="134" cy="273" rx="17" ry="21" fill="#8f9396" />
          <ellipse cx="105" cy="331" rx="16" ry="16" fill="#8f9396" />
        </g>
        {points.map(([x, y]) => <GcpMark key={`${x}-${y}`} x={x} y={y} />)}
      </g>
    </svg>
  </section>
);

/* ---------- layer panel ---------- */

const Tick = ({ label, on }: { label: string; on: boolean }) => {
  const [checked, setChecked] = useState(on);
  return (
    <span className="grid h-[13px] w-[13px] place-items-center">
      <input type="checkbox" aria-label={label} checked={checked} onChange={() => setChecked(!checked)} className="col-start-1 row-start-1 h-[13px] w-[13px] appearance-none border border-[#bcbcbc] bg-[#fafafa]" />
      {checked && (
        <svg viewBox="0 0 10 10" className="pointer-events-none z-10 col-start-1 row-start-1 h-[9px] w-[9px]" aria-hidden="true">
          <path d="M1 1l8 8M9 1L1 9" stroke="#000" strokeWidth="3.200" />
        </svg>
      )}
    </span>
  );
};

type Layer = { name: string; on: boolean; kind: "point" | "blue" | "grey"; selected?: boolean; items: [string, string][] };

const GREY = "#96999c", ORANGE = "#f28c0d", MALTA = "#d6dfc6", RED = "#cb3519", TAN = "#b5a68a";

const layers: Layer[] = [
  { name: "pyarchinit_punti_rif", on: true, kind: "point", items: [["GCP", ""]] },
  { name: "Pavimentazione US5", on: false, kind: "blue", selected: true, items: [["pavimentazione", TAN]] },
  { name: "Pianta di fase", on: false, kind: "grey", items: [["ciottolo", GREY], ["laterizio", ORANGE], ["malta", MALTA], ["risega", RED], ["pavimentazione", TAN]] },
  { name: "Muro US19", on: true, kind: "grey", items: [["ciottolo", GREY], ["laterizio", ORANGE], ["malta", MALTA], ["risega", RED]] },
];

const LayerIcon = ({ kind }: { kind: Layer["kind"] }) => (
  <svg viewBox="0 0 18 16" className="h-4 w-[18px] shrink-0" aria-hidden="true">
    {kind === "point" ? (
      <g fill="#fff" stroke="#888"><circle cx="4" cy="14" r="1.100" /><circle cx="6" cy="7" r="1.100" /><circle cx="13" cy="4" r="1.100" /></g>
    ) : (
      <path d="M2 5c1-3 4-2 7-1 3 0 7-2 8 0 0 2-2 4-1 7-3 2-6-2-8-1-3 1-5 3-7 2 1-2 1-4 1-7z" fill={kind === "blue" ? "#a9cdee" : "#dedede"} stroke={kind === "blue" ? "#6d9cc8" : "#999"} />
    )}
  </svg>
);

const LayerTree = () => (
  <ul className="flex-1 overflow-hidden rounded-tl-sm border-2 border-r-0 border-[#b0b0b0] bg-white">
    {layers.map((l, n) => {
      const last = n === layers.length - 1;
      return (
        <li key={l.name}>
          <div className={l.selected ? "flex h-4 items-center bg-[#efefef]" : "flex h-4 items-center"}>
            <button type="button" aria-label={`Comprimi ${l.name}`} aria-expanded="true" className="h-4 w-[18px] shrink-0">
              <svg viewBox="0 0 18 16" className="h-4 w-[18px]" aria-hidden="true">
                <path d={last ? "M9.500 0v3M14 7.500h4" : "M9.500 0v3M9.500 12v4M14 7.500h4"} stroke="#888" strokeDasharray="1 1" />
                <path d="M5.500 3.500h8v8h-8z" fill="#fff" stroke="#777" />
                <path d="M7 7.500h5" stroke="#333" />
              </svg>
            </button>
            <span className="flex h-4 w-[23px] shrink-0 items-center justify-center"><Tick label={l.name} on={l.on} /></span>
            <LayerIcon kind={l.kind} />
            <span className={l.selected ? "ml-[5px] whitespace-nowrap pt-0.5 font-bold underline" : "ml-[5px] whitespace-nowrap pt-0.5 font-bold"}>{l.name}</span>
          </div>
          <ul>
            {l.items.map(([name, color], i) => (
              <li key={name} className="flex h-4 items-center">
                <svg viewBox="0 0 41 16" className="h-4 w-[41px] shrink-0" aria-hidden="true">
                  {!last && <path d="M9.500 0v16" stroke="#888" strokeDasharray="1 1" />}
                  <path d={i === l.items.length - 1 ? "M29.500 0v8M30 7.500h9" : "M29.500 0v16M30 7.500h9"} stroke="#999" strokeDasharray="1 1" fill="none" />
                </svg>
                {color ? (
                  <svg viewBox="0 0 18 16" className="h-4 w-[18px] shrink-0" aria-hidden="true">
                    <path d="M1.500 .5h15v15h-15z" fill={color} stroke="#5c5c58" strokeWidth="1.300" />
                  </svg>
                ) : (
                  <svg viewBox="0 0 18 16" className="h-4 w-[18px] shrink-0" aria-hidden="true">
                    <g stroke="#000" strokeWidth="1.200" fill="none"><circle cx="9.500" cy="7.500" r="4.700" /><path d="M2 7.500h15M9.500 0v15" /></g>
                  </svg>
                )}
                <span className="ml-[5px] whitespace-nowrap pt-0.5">{name}</span>
              </li>
            ))}
          </ul>
        </li>
      );
    })}
  </ul>
);

const Dots = ({ n }: { n: number }) => (
  <>
    {Array.from({ length: n }, (_, i) => (
      <g key={i}>
        <path d={`M${i * 4} 2h2v2h-2zM${i * 4 + 2} 0h2v2h-2z`} fill="#cacaca" />
        <path d={`M${i * 4} 2h1v1h-1zM${i * 4 + 2} 0h1v1h-1z`} fill="#fff" />
      </g>
    ))}
  </>
);

const LayerDock = () => (
  <aside className="flex w-[215px] shrink-0 flex-col">
    <h2 className="flex h-5 items-center pl-[5px]">
      <svg className="h-1 w-[113px] shrink-0" aria-hidden="true"><Dots n={28} /></svg>
      <span className="mx-[9px] text-[10px]">Layer</span>
      <svg className="h-1 min-w-0 flex-1" aria-hidden="true"><Dots n={60} /></svg>
    </h2>
    <LayerTree />
  </aside>
);

/* ---------- frame ---------- */

const menus = ["Progetto", "Modifica", "Visualizza", "Layer", "Impostazioni", "Plugins", "Vettore", "Raster", "Database", "DigitizingTools", "Processing", "Guida", "pyArchInit"];

const TitleBar = () => (
  <header className="flex h-[30px] shrink-0 items-center border-y border-t-[#241a1d] border-b-[#3a3033] bg-[linear-gradient(90deg,#8f8385_0,#b3a6a7_40px,#887b7d_75px,#b3a5a6_112px,#857879_150px,#b3a4a6_188px,#807375_225px,#a18f7c_260px,#75686a_285px,#5a4c4e_330px,#6b5d5f_420px,#53474a_500px,#5f5255_590px,#d3c3c3_615px,#d6c6c5_685px,#5f5153_705px,#655759_800px,#5b4e51_850px,#716466_960px,#665759_1070px,#807072_1160px,#74676a_1275px)] shadow-[inset_0_1px_0_#b9adae]">
    <svg viewBox="0 0 16 16" className="h-4 w-4 shrink-0" aria-hidden="true">
      <path d="M6 2C2 2-1 6 0 10c1 5 6 6 9 4l3 2 2-1-3-3c2-3 2-7-1-9z" fill="#e6e24c" stroke="#a8a83c" strokeWidth=".8" />
      <path d="M4 8l2 3 4-5" stroke="#445522" strokeWidth="1.800" fill="none" />
      <path d="M7 8l5-6" stroke="#1d7a22" strokeWidth="2.200" />
      <path d="M9 1l5-1-1 5z" fill="#1d7a22" />
    </svg>
    <h1 className="ml-[5px] whitespace-nowrap font-['Roboto','Noto_Sans',sans-serif] text-xs text-black">QGIS 2.0.1-Dufour - digitalizzazione_pianta_us_19</h1>
    <button type="button" aria-label="Riduci a icona" className="ml-auto flex h-[19px] w-[11px] items-center justify-end self-start rounded-bl-md border-b border-l border-[#cfc5c6] bg-[#8c7f81]">
      <span className="h-1 w-0.5 border border-r-0 border-[#333] bg-white" />
    </button>
  </header>
);

const box = "flex h-6 shrink-0 items-center border border-[#909090] shadow-[inset_1px_1px_0_#d8d8d8]";

const StatusBar = () => (
  <footer className="h-[17px] shrink-0 overflow-hidden pt-0.5">
    <div className="flex items-start gap-[3px] pl-[435px]">
      <a href="#plugins" className={`${box} w-[197px] whitespace-nowrap text-[10px] text-[#0000ff] underline`}>Plugin, c'è un aggiornamento disponibile</a>
      <button type="button" aria-label="Estensione o coordinate" className={`${box} w-[23px] justify-center bg-[#e2e2e2]`}>
        <svg viewBox="0 0 18 18" className="h-[18px] w-[18px]" fill="none" aria-hidden="true">
          <rect x="3" y="1" width="8" height="12" rx="4" transform="rotate(-35 7 7)" fill="#e8e8e8" stroke="#222" strokeWidth="1.500" />
          <path d="M3 6l7-3M7 2l2 4M12 4l4-3M11 12l2-3 2 5" stroke="#222" strokeWidth="1.500" />
        </svg>
      </button>
      <label htmlFor="coord" className={`${box} w-[66px] pl-[3px]`}>Coordinata:</label>
      <input id="coord" defaultValue="2322246.806,4881525.701" className={`${box} w-[304px] flex-1 bg-white text-center outline-none`} />
      <label htmlFor="scale" className={`${box} w-[35px] pl-1`}>Scala</label>
      <span className="grid h-6 w-[83px] shrink-0 items-center">
        <select id="scale" defaultValue="1:30" className="col-start-1 row-start-1 h-6 w-full appearance-none border border-[#909090] bg-white pl-1 outline-none">
          <option>1:30</option>
          <option>1:100</option>
        </select>
        <span className="pointer-events-none z-10 col-start-1 row-start-1 mr-px flex h-[22px] w-[17px] items-center justify-center justify-self-end border-l border-[#b0b0b0] bg-[#f4f4f4]">
          <svg viewBox="0 0 8 4" className="h-1 w-2" aria-hidden="true"><path d="M0 0h8L4 4z" /></svg>
        </span>
      </span>
      <button type="button" aria-label="Ferma visualizzazione" className={`${box} w-[23px] justify-center bg-[#e2e2e2]`}>
        <svg viewBox="0 0 18 18" className="h-[18px] w-[18px]" fill="none" aria-hidden="true">
          <path d="M8 13l8-10 1 2-5 11z" fill="#aaa" stroke="#777" />
          <circle cx="7" cy="6" r="4.500" stroke="#dc3434" strokeWidth="1.800" />
          <path d="M4 9l6-6" stroke="#dc3434" strokeWidth="1.600" />
        </svg>
      </button>
      <label className={`${box} w-[70px] gap-1 pl-[3px]`}>
        <Tick label="Aggiorna" on />
        <span>Aggiorna</span>
      </label>
      <button type="button" className={`${box} w-[17px] overflow-hidden pl-0.5`}>EPSG</button>
    </div>
  </footer>
);

export default function App() {
  return (
    <div className="flex h-screen flex-col overflow-hidden bg-[#f0f0f0] font-['DejaVu_Sans_Condensed','DejaVu_Sans',sans-serif] text-[11px] leading-4 text-black">
      <TitleBar />
      <nav aria-label="Menu" className="flex h-[23px] shrink-0 items-center gap-px border-b border-[#b4b4b4] pl-[3px] pt-0.5">
        {menus.map((m) => (
          <button key={m} type="button" className="whitespace-nowrap px-1.5">{m}</button>
        ))}
      </nav>
      <FileBar />
      <EditBar />
      <ArchBar />
      <main className="flex min-h-0 flex-1">
        <MapCanvas />
        <div className="flex w-[7px] shrink-0 items-center justify-center">
          <svg className="h-[188px] w-1" aria-hidden="true">
            {Array.from({ length: 47 }, (_, i) => (
              <path key={i} d={`M0 ${i * 4}h2v2h-2zM2 ${i * 4 + 2}h2v2h-2z`} fill="#c6c6c6" />
            ))}
          </svg>
        </div>
        <LayerDock />
      </main>
      <StatusBar />
    </div>
  );
}
